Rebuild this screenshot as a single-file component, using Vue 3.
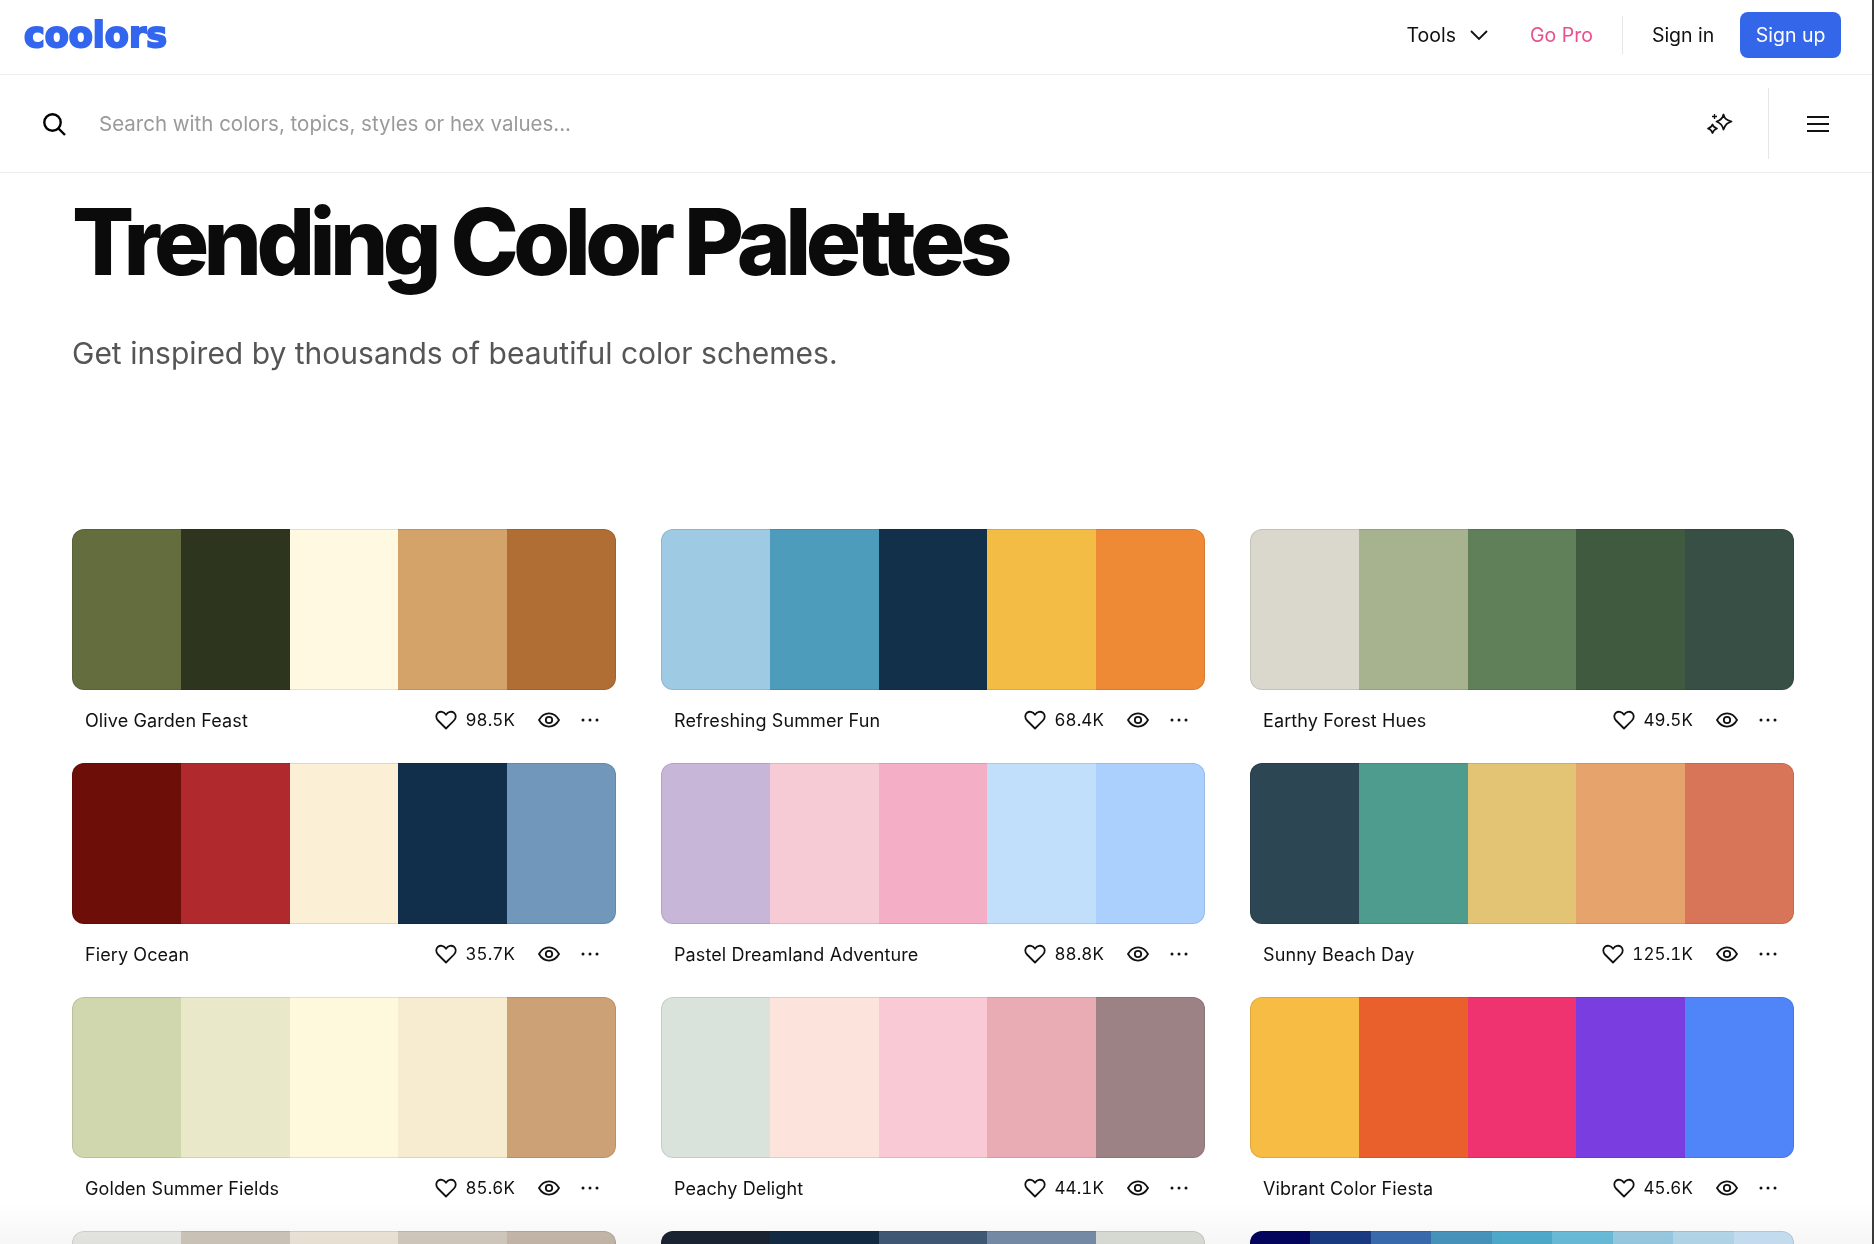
<template>
  <div class="page">
    <header class="topbar">
      <span class="logo">coolors</span>
      <nav class="nav">
        <a class="nav-link tools">
          Tools
          <svg class="chev" width="20" height="12" viewBox="0 0 20 12" fill="none" stroke="#111" stroke-width="1.8">
            <path d="M2 2l8 8 8-8" />
          </svg>
        </a>
        <a class="nav-link pro">Go Pro</a>
        <span class="nav-sep"></span>
        <a class="nav-link signin">Sign in</a>
        <button class="signup">Sign up</button>
      </nav>
    </header>

    <div class="searchbar">
      <svg class="search-icon" width="26" height="26" viewBox="0 0 26 26" fill="none" stroke="#000" stroke-width="2.4">
        <circle cx="11.5" cy="11.5" r="8.2" />
        <path d="M17.5 17.5l6.5 6.5" />
      </svg>
      <span class="placeholder">Search with colors, topics, styles or hex values...</span>
      <svg class="spark" width="28" height="24" viewBox="0 0 28 24" fill="none" stroke="#111" stroke-width="1.8" stroke-linejoin="round">
        <path d="M17.5 2.5c1 4 2.500 5.500 8 7-4.500 1.500-6 3-8 8-1-4.500-3-6.500-7-8 4-1 6-3 7-7z" />
        <path d="M6.500 12.500c.6 2.200 1.500 3.100 4.500 4-2.700.9-3.600 1.800-4.500 4.500-.7-2.700-1.800-3.600-4.500-4.500 2.700-.9 3.800-1.800 4.500-4z" />
        <path d="M8.500 2v5M6 4.500h5" stroke-width="1.300" />
      </svg>
      <span class="search-sep"></span>
      <svg class="menu" width="22" height="18" viewBox="0 0 22 18" stroke="#111" stroke-width="2">
        <path d="M0 2h22M0 9h22M0 16h22" />
      </svg>
    </div>

    <main class="content">
      <h1>Trending Color Palettes</h1>
      <p class="sub">Get inspired by thousands of beautiful color schemes.</p>

      <div class="grid">
        <div class="card" v-for="p in palettes" :key="p.colors[0]">
          <div class="swatches">
            <div class="swatch" v-for="c in p.colors" :key="c" :style="{ background: c }"></div>
          </div>
          <div class="meta" v-if="p.name">
            <span class="name">{{ p.name }}</span>
            <span class="actions">
              <svg class="heart" width="22" height="20" viewBox="0 0 22 20" fill="none" stroke="#111" stroke-width="1.800" stroke-linejoin="round">
                <path d="M11 18.500L3 10.500C.6 8 .8 4.600 3 2.800c2.300-1.800 5.700-1.300 8 1.900 2.300-3.200 5.700-3.700 8-1.900 2.200 1.800 2.400 5.200 0 7.700z" />
              </svg>
              <span class="likes">{{ p.likes }}</span>
              <svg class="eye" width="22" height="16" viewBox="0 0 22 16" fill="none" stroke="#111" stroke-width="1.800">
                <path d="M1 8c2.500-4.400 5.800-6.600 10-6.600S18.500 3.600 21 8c-2.500 4.400-5.800 6.600-10 6.600S3.500 12.400 1 8z" />
                <circle cx="11" cy="8" r="3.200" />
              </svg>
              <svg class="dots" width="18" height="4" viewBox="0 0 18 4" fill="#111">
                <circle cx="2" cy="2" r="1.500" />
                <circle cx="9" cy="2" r="1.500" />
                <circle cx="16" cy="2" r="1.500" />
              </svg>
            </span>
          </div>
        </div>
      </div>
    </main>

    <div class="fade"></div>
  </div>
</template>

<script setup>
// the fourth row is cut by the window, so it has swatches only
const palettes = [
  { name: 'Olive Garden Feast', likes: '98.5K', colors: ['#636d3e', '#2e351e', '#fef9e0', '#d4a369', '#b06e35'] },
  { name: 'Refreshing Summer Fun', likes: '68.4K', colors: ['#9ecae3', '#4d9cbc', '#12304a', '#f3bc45', '#ee8a36'] },
  { name: 'Earthy Forest Hues', likes: '49.5K', colors: ['#dad8cc', '#a7b38e', '#5f8058', '#3f5a3f', '#374f44'] },
  { name: 'Fiery Ocean', likes: '35.7K', colors: ['#6e0e09', '#b02a2d', '#fbf0d5', '#112f4b', '#7198ba'] },
  { name: 'Pastel Dreamland Adventure', likes: '88.8K', colors: ['#c8b6d9', '#f6cbd6', '#f4aec5', '#c1dffa', '#abd0fd'] },
  { name: 'Sunny Beach Day', likes: '125.1K', colors: ['#2c4653', '#4e9c8d', '#e2c474', '#e6a36b', '#d87558'] },
  { name: 'Golden Summer Fields', likes: '85.6K', colors: ['#d0d6ad', '#e9e9c9', '#fef8dd', '#f8ecd0', '#cca176'] },
  { name: 'Peachy Delight', likes: '44.1K', colors: ['#dae2dc', '#fce4dc', '#f9c9d5', '#eaacb4', '#9c8285'] },
  { name: 'Vibrant Color Fiesta', likes: '45.6K', colors: ['#f6bc44', '#ea602c', '#ee3370', '#7a3de0', '#4f85f9'] },
  { colors: ['#e9e9e5', '#cfc7bc', '#f0e7da', '#d5ccc0', '#c7baac'] },
  { colors: ['#1a2433', '#132c44', '#415a77', '#778da9', '#dce0d9'] },
  { colors: ['#03045e', '#1a3c84', '#3a6db0', '#4796c0', '#4fadcf', '#6abedc', '#9acde6', '#b5d9ec', '#c9e2f5'] }
]
</script>

<style>
html,
body {
  margin: 0;
  background: #fff;
}
</style>

<style scoped>
.page {
  position: relative;
  width: 1874px;
  height: 1244px;
  box-sizing: border-box;
  border-right: 2px solid #3a3a3a;
  overflow: hidden;
  background: #fff;
  font-family: Inter, "Liberation Sans", sans-serif;
  color: #111;
}

.topbar {
  display: flex;
  align-items: center;
  justify-content: space-between;
  box-sizing: border-box;
  height: 75px;
  padding: 0 31px 4px 24px;
  border-bottom: 1px solid #ececec;
}

.logo {
  font-family: "DejaVu Sans", sans-serif;
  font-weight: 700;
  font-size: 35px;
  line-height: 40px;
  letter-spacing: 0;
  color: #3366ee;
  -webkit-text-stroke: 2px #3366ee;
}

.nav {
  display: flex;
  align-items: center;
  font-size: 19.5px;
}

.tools {
  display: flex;
  align-items: center;
  gap: 13px;
}

.pro {
  margin-left: 41px;
  color: #e8518d;
}

.nav-sep {
  width: 1px;
  height: 38px;
  margin: 0 29px;
  background: #e6e6e6;
}

.signup {
  height: 46px;
  margin-left: 26px;
  padding: 0 15.5px;
  border: 0;
  border-radius: 8px;
  background: #3366e8;
  color: #fff;
  font: inherit;
}

.searchbar {
  display: flex;
  align-items: center;
  box-sizing: border-box;
  height: 98px;
  padding-left: 41px;
  border-bottom: 1px solid #ececec;
}

.placeholder {
  margin-left: 32px;
  flex: 1;
  font-size: 20.5px;
  color: #9a9a9a;
}

.spark {
  margin-right: 34px;
}

.search-sep {
  width: 1px;
  height: 71px;
  background: #e6e6e6;
}

.menu {
  margin: 0 43px 0 38px;
}

.content {
  padding: 0 78px 0 72px;
}

h1 {
  margin: 13px 0 0;
  font-size: 92px;
  line-height: 112px;
  font-weight: 800;
  letter-spacing: -5.6px;
  color: #0b0b0b;
}

.sub {
  margin: 35px 0 0;
  font-size: 30px;
  line-height: 40px;
  color: #555;
}

.grid {
  display: grid;
  grid-template-columns: repeat(3, 1fr);
  column-gap: 45px;
  margin-top: 156px;
}

.card {
  height: 234px;
}

.swatches {
  position: relative;
  display: flex;
  height: 161px;
  border-radius: 12px;
  overflow: hidden;
}

.swatches::after {
  content: "";
  position: absolute;
  inset: 0;
  border-radius: 12px;
  box-shadow: inset 0 0 0 1px rgba(0, 0, 0, 0.1);
}

.swatch {
  flex: 1;
}

.meta {
  display: flex;
  align-items: center;
  justify-content: space-between;
  height: 60px;
  padding: 0 17px 0 13px;
  font-size: 18px;
  letter-spacing: 0.1px;
}

.actions {
  display: flex;
  align-items: center;
}

.likes {
  margin-left: 8px;
  font-size: 17px;
  font-variant-numeric: tabular-nums;
}

.eye {
  margin-left: 23px;
}

.dots {
  margin-left: 21px;
}

.fade {
  position: absolute;
  left: 0;
  right: 0;
  bottom: 0;
  height: 40px;
  background: linear-gradient(#fff, #f6f6f6);
  mix-blend-mode: multiply;
  pointer-events: none;
}
</style>
